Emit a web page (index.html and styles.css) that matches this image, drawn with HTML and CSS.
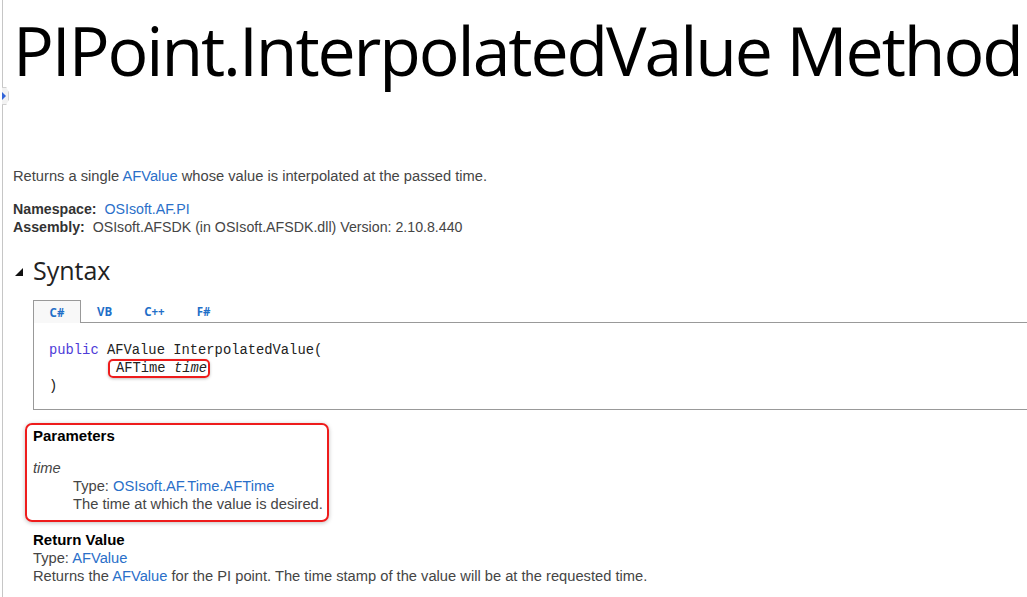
FILE: index.html
```html
<!DOCTYPE html>
<html>
<head>
<meta charset="utf-8">
<link rel="stylesheet" href="styles.css">
</head>
<body>
<div class="page">
  <div class="rail">
    <div class="rail-toggle"><span class="rail-arrow"></span></div>
  </div>
  <div class="content">
    <h1 class="title">PIPoint.InterpolatedValue Method</h1>
    <p class="summary">Returns a single <a class="link">AFValue</a> whose value is interpolated at the passed time.</p>
    <div class="meta">
      <div><b class="meta-label">Namespace:</b>&nbsp; <a class="link">OSIsoft.AF.PI</a></div>
      <div><b class="meta-label">Assembly:</b>&nbsp; OSIsoft.AFSDK (in OSIsoft.AFSDK.dll) Version: 2.10.8.440</div>
    </div>
    <h2 class="section"><span class="section-arrow"></span>Syntax</h2>
    <div class="code-block">
      <div class="tabs">
        <div class="tab tab-active">C#</div>
        <div class="tab">VB</div>
        <div class="tab">C++</div>
        <div class="tab">F#</div>
      </div>
      <div class="code-box">
<pre class="code"><span class="kw">public</span> AFValue InterpolatedValue(
       <span class="hl">AFTime <i>time</i></span>
)</pre>
      </div>
    </div>
    <div class="params hlbox">
      <div class="sub-head">Parameters</div>
      <div class="param-name">time</div>
      <div class="param-desc">
        <div>Type: <a class="link">OSIsoft.AF.Time.AFTime</a></div>
        <div>The time at which the value is desired.</div>
      </div>
    </div>
    <div class="returns">
      <div class="sub-head">Return Value</div>
      <div>Type: <a class="link">AFValue</a></div>
      <div>Returns the <a class="link">AFValue</a> for the PI point. The time stamp of the value will be at the requested time.</div>
    </div>
  </div>
</div>
</body>
</html>
```

FILE: styles.css
```css
html, body {
  margin: 0;
  padding: 0;
  background: #ffffff;
  overflow: hidden;
}
.page {
  display: flex;
  min-height: 597px;
  font-family: "Liberation Sans", Arial, sans-serif;
  font-size: 14.7px;
  color: #454545;
}
.rail {
  width: 2px;
  flex: none;
  border-right: 1px solid #c6c6c6;
  position: relative;
}
.rail-toggle {
  position: absolute;
  left: 2px;
  top: 87px;
  width: 6px;
  height: 16px;
  background: #f2f2f2;
  border: 1px solid #d0d0d0;
  border-left: none;
  clip-path: polygon(0 0, 60% 0, 100% 30%, 100% 70%, 60% 100%, 0 100%);
}
.rail-arrow {
  position: absolute;
  left: 0;
  top: 4px;
  width: 0;
  height: 0;
  border-top: 4px solid transparent;
  border-bottom: 4px solid transparent;
  border-left: 4px solid #3264d8;
}
.content {
  flex: 1;
  padding-left: 10px;
  min-width: 0;
}
.title {
  font-family: "Open Sans", "Noto Sans", sans-serif;
  font-weight: 400;
  font-size: 68px;
  line-height: 92px;
  color: #000;
  margin: 4px 0 0 0;
  letter-spacing: -2.1px;
  white-space: nowrap;
}
.summary {
  margin: 71px 0 0 0;
  line-height: 18px;
}
.link {
  color: #2a6fc9;
  text-decoration: none;
}
.meta {
  margin-top: 15px;
  line-height: 18px;
  font-size: 14.2px;
}
.meta-label {
  font-weight: bold;
  color: #333;
}
.section {
  display: flex;
  align-items: center;
  margin: 17px 0 0 0;
  font-family: "Open Sans", "Noto Sans", sans-serif;
  font-weight: 500;
  font-size: 25px;
  line-height: 34px;
  color: #222;
}
.section-arrow {
  width: 0;
  height: 0;
  border-left: 8px solid transparent;
  border-bottom: 8px solid #111;
  margin: 4px 10px 0 2px;
}
.code-block {
  margin: 13px -40px 0 20px;
}
.tabs {
  display: flex;
  height: 22px;
  font-family: "Open Sans", "Noto Sans", sans-serif;
  font-size: 11.5px;
  font-weight: 700;
}
.tab {
  color: #1f6fc8;
  padding: 0 16px;
  display: flex;
  align-items: center;
  justify-content: center;
}
.tab-active {
  width: 46px;
  padding: 0;
  background: #f8f8f8;
  border: 1px solid #999;
  border-bottom: none;
  margin-bottom: -1px;
  position: relative;
  z-index: 1;
}
.code-box {
  border: 1px solid #999;
  height: 88px;
  padding: 19px 0 0 15px;
  box-sizing: border-box;
}
.code {
  margin: 0;
  font-family: "Liberation Mono", "DejaVu Sans Mono", monospace;
  font-size: 13.8px;
  line-height: 18px;
  color: #222;
}
.kw {
  color: #4d3cd8;
}
.hl {
  border: 2px solid #ee1c1c;
  border-radius: 5px;
  padding: 0 1px 0 6px;
  margin-left: 1px;
  box-shadow: 0 1px 3px rgba(0,0,0,0.25);
}
.hlbox {
  border: 2px solid #ee1c1c;
  border-radius: 7px;
  box-shadow: 0 1px 4px rgba(0,0,0,0.25);
}
.params {
  margin: 13px 0 0 12px;
  width: 294px;
  padding: 2px 0 7px 6px;
  box-sizing: content-box;
  line-height: 18px;
}
.sub-head {
  font-weight: bold;
  color: #000;
  font-size: 15px;
  line-height: 18px;
}
.param-name {
  font-style: italic;
  margin-top: 14px;
}
.param-desc {
  padding-left: 40px;
}
.returns {
  margin: 9px 0 0 20px;
  line-height: 18px;
}
```
